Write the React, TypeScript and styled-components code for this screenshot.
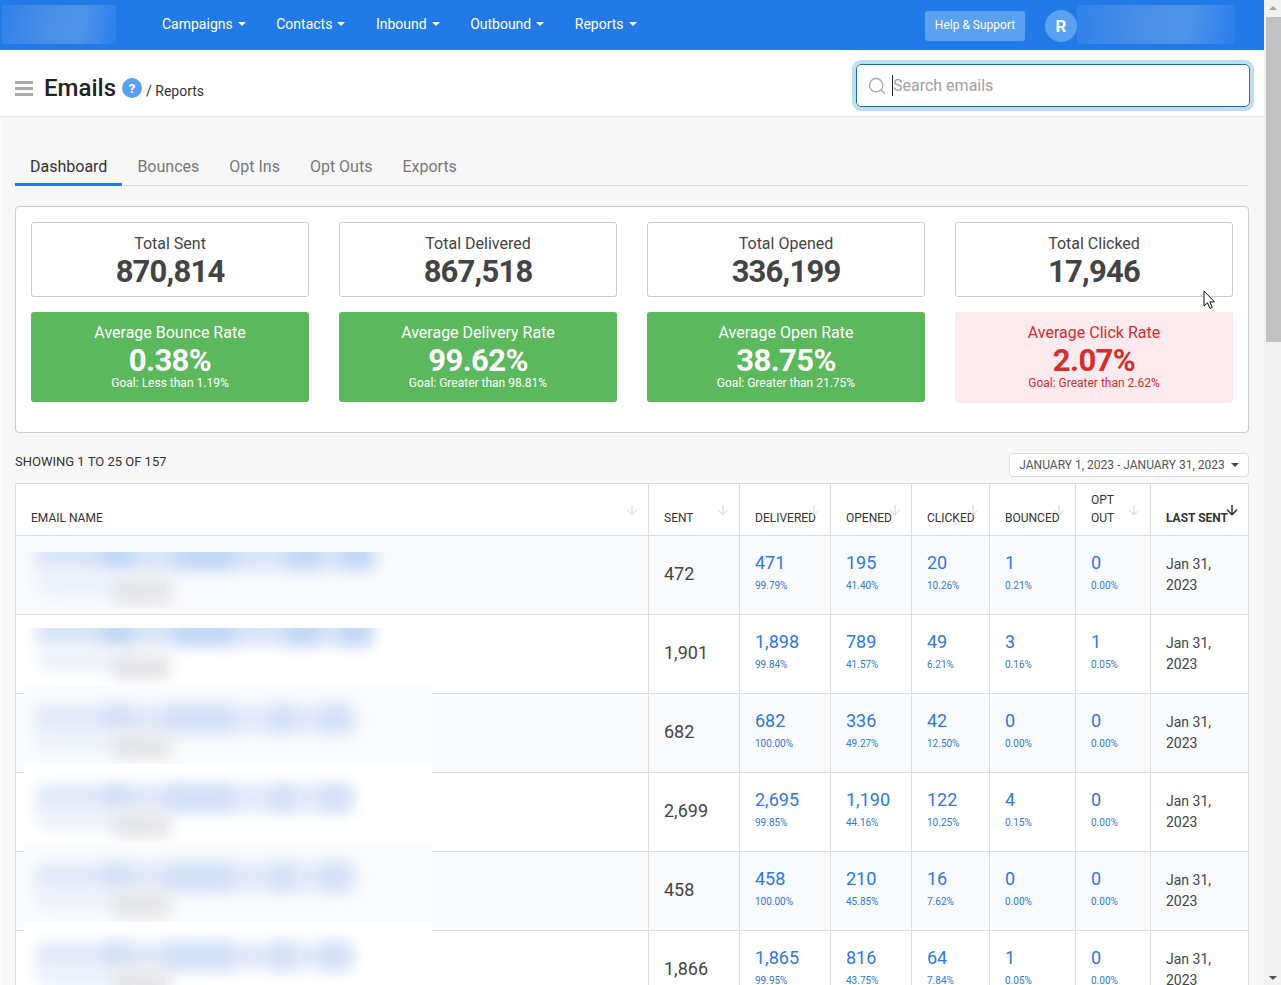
import React from "react";
import styled, { createGlobalStyle } from "styled-components";
import { ArrowDown, Search } from "lucide-react";

const Global = createGlobalStyle`
  html, body { margin: 0; padding: 0; height: 985px; overflow: hidden; background: #f7f7f7; }
  body { font-family: Roboto, "Liberation Sans", sans-serif; color: #333; }
  * { box-sizing: border-box; }
`;

const Shell = styled.div`
  display: flex;
  width: 1281px;
  height: 985px;
  overflow: hidden;
`;
const Page = styled.div`
  width: 1264px;
  flex: none;
  position: relative;
`;
const Nav = styled.nav`
  height: 50px;
  background: #227ae8;
  display: flex;
  align-items: center;
  color: #fff;
`;
const Smudge = styled.div<{ $w: number }>`
  width: ${(p) => p.$w}px;
  height: 39px;
  flex: none;
  margin-top: -2px;
  background: linear-gradient(100deg, #2f82e9 0%, #4a90e8 45%, #4c93ea 70%, #2a7fea 100%);
`;
const LogoSmudge = styled(Smudge)`
  margin-left: 2px;
`;
const Menu = styled.div`
  display: flex;
  gap: 30.5px;
  margin-left: 46px;
  margin-top: -2px;
`;
const MenuItem = styled.span`
  font-size: 14px;
  display: flex;
  align-items: center;
  gap: 5px;
`;
const Caret = styled.i<{ $color?: string }>`
  display: inline-block;
  width: 0;
  height: 0;
  border-left: 4px solid transparent;
  border-right: 4px solid transparent;
  border-top: 4px solid ${(p) => p.$color ?? "#fff"};
`;
const HelpButton = styled.button`
  margin-left: auto;
  width: 100px;
  height: 30px;
  margin-top: 2px;
  border: 0;
  border-radius: 3px;
  background: #5ca0f2;
  color: #fff;
  font: 12px Roboto, sans-serif;
  padding: 0 0 2px;
`;
const Avatar = styled.div`
  width: 32px;
  height: 32px;
  border-radius: 50%;
  background: #5ca0f2;
  margin-left: 20px;
  margin-top: 2px;
  display: flex;
  align-items: center;
  justify-content: center;
  font-size: 17px;
  font-weight: 700;
`;
const UserSmudge = styled(Smudge)`
  margin-right: 29px;
  margin-top: -2px;
`;
const Header = styled.header`
  height: 67px;
  background: #fff;
  border-bottom: 1px solid #e3e4e6;
  display: flex;
  align-items: center;
  padding: 12px 14px 0 15px;
`;
const Hamburger = styled.div`
  width: 18px;
  height: 15px;
  margin-top: -2px;
  border-top: 3px solid #a8a8a8;
  border-bottom: 3px solid #a8a8a8;
  position: relative;
  &::after {
    content: "";
    position: absolute;
    left: 0;
    right: 0;
    top: 3px;
    height: 3px;
    background: #a8a8a8;
  }
`;
const Title = styled.h1`
  font-size: 24px;
  font-weight: 500;
  color: #222;
  margin: 0 0 0 11px;
  position: relative;
  top: -1px;
`;
const HelpDot = styled.span`
  width: 20px;
  height: 20px;
  margin-left: 6px;
  margin-top: -2px;
  border-radius: 50%;
  background: #5b9ff1;
  color: #fff;
  font-size: 13px;
  font-weight: 700;
  display: flex;
  align-items: center;
  justify-content: center;
`;
const Crumb = styled.span`
  font-size: 14px;
  margin-left: 4px;
  margin-top: 4px;
  color: #333;
`;
const SearchBox = styled.div`
  margin-left: auto;
  margin-top: -7px;
  width: 394px;
  height: 43px;
  border: 1px solid #1c6aa8;
  outline: 4px solid #bcdfef;
  border-radius: 5px;
  background: #fff;
  display: flex;
  align-items: center;
  padding-left: 10px;
  color: #a9adb5;
`;
const Placeholder = styled.span`
  font-size: 16px;
  color: #a0a0a0;
  margin-left: 5px;
  border-left: 1px solid #222;
  line-height: 21px;
`;
const Content = styled.main`
  padding: 30px 15px 0 14px;
  border-left: 1px solid #fcfcfc;
`;
const Tabs = styled.div`
  display: flex;
  height: 39px;
  border-bottom: 1px solid #ddd;
`;
const Tab = styled.div<{ $active?: boolean }>`
  font-size: 16px;
  padding: 10px 15px 0;
  height: 39px;
  color: ${(p) => (p.$active ? "#333" : "#777")};
  border-bottom: ${(p) => (p.$active ? "3px solid #227ae8" : "0")};
`;
const StatsCard = styled.section`
  margin-top: 20px;
  height: 227px;
  background: #fff;
  border: 1px solid #ccc;
  border-radius: 4px;
  padding: 15px;
  display: grid;
  grid-template-columns: repeat(4, 278px);
  grid-template-rows: 75px 91px;
  column-gap: 30px;
  row-gap: 15px;
`;
const TotalBox = styled.div`
  border: 1px solid #ccc;
  border-radius: 3px;
  text-align: center;
  padding-top: 12px;
  background: #fff;
`;
const TotalLabel = styled.div`
  font-size: 16px;
  line-height: 18px;
  color: #444;
`;
const TotalValue = styled.div`
  font-size: 31px;
  letter-spacing: -0.8px;
  line-height: 38px;
  font-weight: 700;
  color: #444;
`;
const RateBox = styled.div<{ $bad?: boolean }>`
  border-radius: 3px;
  text-align: center;
  padding-top: 12px;
  height: ${(p) => (p.$bad ? 91 : 90)}px;
  background: ${(p) => (p.$bad ? "#fdeaef" : "#5cb85c")};
  color: ${(p) => (p.$bad ? "#d32f2f" : "#fff")};
`;
const RateLabel = styled.div`
  font-size: 16px;
  line-height: 18px;
`;
const RateValue = styled.div`
  font-size: 31px;
  letter-spacing: -0.6px;
  line-height: 33px;
  padding-top: 2px;
  font-weight: 700;
`;
const RateGoal = styled.div`
  font-size: 12px;
  line-height: 12px;
`;
const ListBar = styled.div`
  height: 50px;
  display: flex;
  justify-content: space-between;
  align-items: flex-start;
`;
const Showing = styled.span`
  font-size: 13px;
  margin-top: 21px;
  line-height: 16px;
  color: #333;
`;
const DateButton = styled.div`
  margin-top: 20px;
  width: 240px;
  height: 24px;
  background: #fff;
  border: 1px solid #ddd;
  border-radius: 4px;
  font-size: 12px;
  color: #555;
  display: flex;
  align-items: center;
  justify-content: center;
  gap: 6px;
`;
const Table = styled.table`
  border-collapse: collapse;
  table-layout: fixed;
  width: 1234px;
  background: #fff;
`;
const Th = styled.th<{ $active?: boolean }>`
  height: 52px;
  font-size: 12px;
  font-weight: ${(p) => (p.$active ? 700 : 400)};
  line-height: 18px;
  color: #333;
  text-align: left;
  vertical-align: bottom;
  padding: 0 0 8px 15px;
  border: 1px solid #ddd;
  position: relative;
  text-transform: uppercase;
`;
const HeadName = styled.span<{ $narrow?: boolean }>`
  display: block;
  ${(p) => (p.$narrow ? "width: 30px;" : "")}
`;
const SortIcon = styled.span<{ $active?: boolean }>`
  position: absolute;
  right: 8px;
  top: 18px;
  display: flex;
  color: ${(p) => (p.$active ? "#222" : "#d4d4d4")};
`;
const Tr = styled.tr<{ $odd: boolean }>`
  background: ${(p) => (p.$odd ? "#f9fafc" : "#fff")};
`;
const Td = styled.td`
  height: 79px;
  border: 1px solid #ddd;
  padding: 0 0 0 15px;
  position: relative;
  vertical-align: middle;
`;
const Plain = styled.span`
  display: block;
  font-size: 18px;
  color: #444;
  margin-bottom: 4px;
`;
const Num = styled.div`
  font-size: 18px;
  line-height: 24px;
  margin-top: -7px;
  color: #2f78e4;
`;
const Pct = styled.div`
  font-size: 10px;
  line-height: 12px;
  margin-top: 5px;
  color: #2f78e4;
`;
const DateText = styled.div`
  font-size: 14px;
  line-height: 21px;
  color: #444;
  width: 60px;
`;
const BlurPatch = styled.div<{ $top: number; $h: number; $cover: boolean; $odd: boolean }>`
  position: absolute;
  left: ${(p) => (p.$cover ? 8 : 9)}px;
  top: ${(p) => p.$top}px;
  width: 408px;
  height: ${(p) => p.$h}px;
  background: ${(p) => (p.$cover ? (p.$odd ? "#fafbfc" : "#fff") : "transparent")};
  overflow: hidden;
  z-index: 1;
`;
const BlurStrip = styled.div<{ $x: number; $y: number; $w: number; $h: number; $c: string }>`
  position: absolute;
  left: ${(p) => p.$x}px;
  top: ${(p) => p.$y}px;
  width: ${(p) => p.$w}px;
  height: ${(p) => p.$h}px;
  background: ${(p) => p.$c};
  filter: blur(8px);
`;
const ScrollTrack = styled.aside`
  width: 17px;
  height: 985px;
  flex: none;
  background: #f1f1f1;
  position: relative;
`;
const ScrollThumb = styled.div`
  position: absolute;
  top: 17px;
  left: 2px;
  right: 0;
  height: 325px;
  background: #c1c1c1;
`;
const ScrollArrow = styled.i<{ $down?: boolean }>`
  position: absolute;
  left: 5px;
  ${(p) => (p.$down ? "bottom: 5px;" : "top: 6px;")}
  width: 0;
  height: 0;
  border-left: 4px solid transparent;
  border-right: 4px solid transparent;
  ${(p) => (p.$down ? "border-top: 4px solid #505050;" : "border-bottom: 4px solid #a3a3a3;")}
`;
const Pointer = styled.svg`
  position: absolute;
  left: 1203px;
  top: 290px;
`;

const totals = [
  ["Total Sent", "870,814"],
  ["Total Delivered", "867,518"],
  ["Total Opened", "336,199"],
  ["Total Clicked", "17,946"],
];
const rates = [
  ["Average Bounce Rate", "0.38%", "Goal: Less than 1.19%", false],
  ["Average Delivery Rate", "99.62%", "Goal: Greater than 98.81%", false],
  ["Average Open Rate", "38.75%", "Goal: Greater than 21.75%", false],
  ["Average Click Rate", "2.07%", "Goal: Greater than 2.62%", true],
] as const;
const columns: [string, number][] = [
  ["Email Name", 633],
  ["Sent", 91],
  ["Delivered", 91],
  ["Opened", 81],
  ["Clicked", 78],
  ["Bounced", 86],
  ["Opt Out", 75],
  ["Last Sent", 98],
];
const rows: string[][][] = [
  [["472"], ["471", "99.79%"], ["195", "41.40%"], ["20", "10.26%"], ["1", "0.21%"], ["0", "0.00%"]],
  [["1,901"], ["1,898", "99.84%"], ["789", "41.57%"], ["49", "6.21%"], ["3", "0.16%"], ["1", "0.05%"]],
  [["682"], ["682", "100.00%"], ["336", "49.27%"], ["42", "12.50%"], ["0", "0.00%"], ["0", "0.00%"]],
  [["2,699"], ["2,695", "99.85%"], ["1,190", "44.16%"], ["122", "10.25%"], ["4", "0.15%"], ["0", "0.00%"]],
  [["458"], ["458", "100.00%"], ["210", "45.85%"], ["16", "7.62%"], ["0", "0.00%"], ["0", "0.00%"]],
  [["1,866"], ["1,865", "99.95%"], ["816", "43.75%"], ["64", "7.84%"], ["1", "0.05%"], ["0", "0.00%"]],
];

const wideSegments = [
  [78, 30],
  [150, 60],
  [262, 32],
  [316, 30],
];
const shortSegments = [
  [78, 30],
  [140, 70],
  [246, 24],
  [296, 30],
];

function Blur({ index }: { index: number }) {
  const first = index === 0;
  const top = first ? 16 : index === 1 ? 13 : -9;
  const h = first ? 57 : index === 1 ? 66 : 88;
  const upper = index < 2;
  const y = upper ? -7 : 23;
  const base = upper ? "#d5e3f7" : "#dee8f8";
  const blue = upper ? "#bfd5f5" : "#d0dff6";
  const segments = upper ? wideSegments : shortSegments;
  return (
    <BlurPatch $top={top} $h={h} $cover={!first} $odd={index % 2 === 0}>
      <BlurStrip $x={12} $y={y - 2} $w={upper ? 336 : 316} $h={26} $c={base} />
      {segments.map(([x, w]) => (
        <BlurStrip key={x} $x={x} $y={y} $w={w} $h={22} $c={blue} />
      ))}
      <BlurStrip $x={14} $y={y + (upper ? 30 : 22)} $w={96} $h={20} $c="#e9f0fb" />
      <BlurStrip $x={90} $y={y + (upper ? 34 : 26)} $w={56} $h={24} $c="#e2e3e5" />
    </BlurPatch>
  );
}

export default function App() {
  return (
    <Shell>
      <Global />
      <Page>
        <Nav>
          <LogoSmudge $w={114} />
          <Menu>
            {["Campaigns", "Contacts", "Inbound", "Outbound", "Reports"].map((m) => (
              <MenuItem key={m}>
                {m}
                <Caret />
              </MenuItem>
            ))}
          </Menu>
          <HelpButton>Help &amp; Support</HelpButton>
          <Avatar>R</Avatar>
          <UserSmudge $w={158} />
        </Nav>
        <Header>
          <Hamburger />
          <Title>Emails</Title>
          <HelpDot>?</HelpDot>
          <Crumb>/ Reports</Crumb>
          <SearchBox>
            <Search size={20} strokeWidth={1.7} />
            <Placeholder>Search emails</Placeholder>
          </SearchBox>
        </Header>
        <Content>
          <Tabs>
            <Tab $active>Dashboard</Tab>
            <Tab>Bounces</Tab>
            <Tab>Opt Ins</Tab>
            <Tab>Opt Outs</Tab>
            <Tab>Exports</Tab>
          </Tabs>
          <StatsCard>
            {totals.map(([l, v]) => (
              <TotalBox key={l}>
                <TotalLabel>{l}</TotalLabel>
                <TotalValue>{v}</TotalValue>
              </TotalBox>
            ))}
            {rates.map(([l, v, g, bad]) => (
              <RateBox key={l} $bad={bad}>
                <RateLabel>{l}</RateLabel>
                <RateValue>{v}</RateValue>
                <RateGoal>{g}</RateGoal>
              </RateBox>
            ))}
          </StatsCard>
          <ListBar>
            <Showing>SHOWING 1 TO 25 OF 157</Showing>
            <DateButton>
              JANUARY 1, 2023 - JANUARY 31, 2023
              <Caret $color="#444" />
            </DateButton>
          </ListBar>
          <Table>
            <colgroup>
              {columns.map(([n, w]) => (
                <col key={n} style={{ width: w }} />
              ))}
            </colgroup>
            <thead>
              <tr>
                {columns.map(([n], i) => (
                  <Th key={n} $active={i === 7}>
                    <HeadName $narrow={i === 6}>{n}</HeadName>
                    <SortIcon $active={i === 7}>
                      <ArrowDown size={16} strokeWidth={i === 7 ? 2 : 1.5} />
                    </SortIcon>
                  </Th>
                ))}
              </tr>
            </thead>
            <tbody>
              {rows.map((r, i) => (
                <Tr key={i} $odd={i % 2 === 0}>
                  <Td>
                    <Blur index={i} />
                  </Td>
                  {r.map((c, j) =>
                    c.length === 1 ? (
                      <Td key={j}>
                        <Plain>{c[0]}</Plain>
                      </Td>
                    ) : (
                      <Td key={j}>
                        <Num>{c[0]}</Num>
                        <Pct>{c[1]}</Pct>
                      </Td>
                    )
                  )}
                  <Td>
                    <DateText>Jan 31, 2023</DateText>
                  </Td>
                </Tr>
              ))}
            </tbody>
          </Table>
        </Content>
        <Pointer width="14" height="20" viewBox="0 0 14 20">
          <path
            d="M1 1v15l3.5-3.2 2.4 5.6 2.4-1-2.4-5.5H11.5Z"
            fill="#fff"
            stroke="#111"
            strokeWidth="1"
            strokeLinejoin="round"
          />
        </Pointer>
      </Page>
      <ScrollTrack>
        <ScrollArrow />
        <ScrollThumb />
        <ScrollArrow $down />
      </ScrollTrack>
    </Shell>
  );
}
